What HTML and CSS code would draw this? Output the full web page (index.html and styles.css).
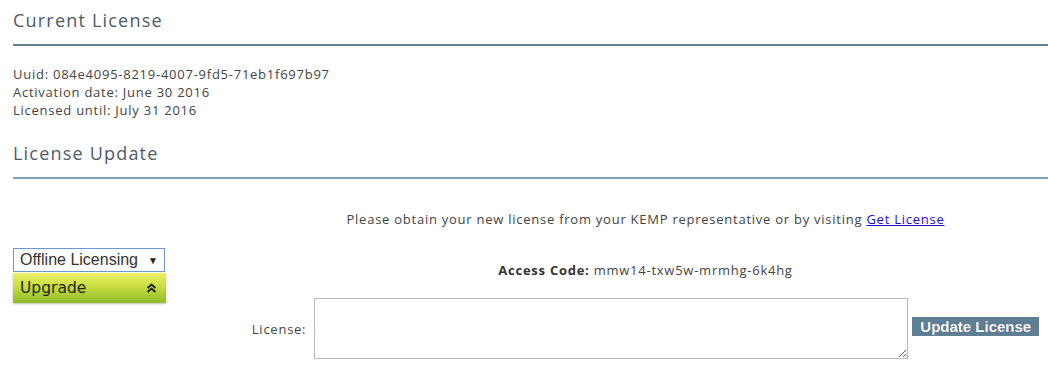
FILE: index.html
```html
<!DOCTYPE html>
<html>
<head>
<meta charset="utf-8">
<link rel="stylesheet" href="styles.css">
</head>
<body>
<div class="page">
  <h2 class="section-title first">Current License</h2>
  <div class="info">
    <div>Uuid: 084e4095-8219-4007-9fd5-71eb1f697b97</div>
    <div>Activation date: June 30 2016</div>
    <div>Licensed until: July 31 2016</div>
  </div>
  <h2 class="section-title second">License Update</h2>
  <div class="update">
    <div class="side">
      <div class="select-box">
        <span class="select-text">Offline Licensing</span>
        <span class="select-arrow">▼</span>
      </div>
      <div class="upgrade">
        <span>Upgrade</span>
        <svg class="chev" width="11" height="10" viewBox="0 0 11 10"><path d="M1.5 5 L5.5 1.5 L9.5 5 M1.5 9 L5.5 5.5 L9.5 9" fill="none" stroke="#222" stroke-width="2"/></svg>
      </div>
    </div>
    <div class="main">
      <p class="notice">Please obtain your new license from your KEMP representative or by visiting <a href="#">Get License</a></p>
      <p class="access"><b>Access Code:</b> mmw14-txw5w-mrmhg-6k4hg</p>
      <div class="form-row">
        <label class="lic-label">License:</label>
        <textarea class="lic-text"></textarea>
        <button class="btn">Update License</button>
      </div>
    </div>
  </div>
</div>
</body>
</html>
```

FILE: styles.css
```css
html, body {
  margin: 0;
  padding: 0;
  background: #fff;
}
body {
  font-family: "Open Sans", "Noto Sans", sans-serif;
  font-size: 13px;
  letter-spacing: 0.75px;
  color: #444;
}
.page {
  padding-left: 13px;
}
.section-title {
  margin: 0;
  font-weight: normal;
  font-size: 18px;
  letter-spacing: 1.2px;
  color: #4d5c6b;
  line-height: 24px;
  padding-bottom: 12px;
}
.section-title.first {
  padding-top: 8px;
  border-bottom: 2px solid #6b8193;
}
.section-title.second {
  border-bottom: 2px solid #86a0b6;
  padding-bottom: 12px;
}
.info {
  padding-top: 19px;
  padding-bottom: 22px;
  line-height: 18px;
}
.update {
  display: flex;
}
.side {
  width: 153px;
  padding-top: 69px;
}
.select-box {
  box-sizing: border-box;
  height: 24px;
  border: 1px solid #6f95d4;
  display: flex;
  align-items: center;
  justify-content: space-between;
  padding: 0 6px 0 6px;
  font-family: "Liberation Sans", Arial, sans-serif;
  font-size: 16px;
  letter-spacing: 0;
  color: #333;
  width: 152px;
}
.select-arrow {
  font-size: 10px;
  color: #222;
}
.upgrade {
  margin-top: 1px;
  height: 30px;
  background: linear-gradient(#ecf164, #c9dd42 45%, #8bbb28);
  box-shadow: 0 1px 2px rgba(0,0,0,0.25);
  display: flex;
  align-items: center;
  justify-content: space-between;
  padding: 0 9px 0 7px;
  font-family: "DejaVu Sans", Verdana, sans-serif;
  font-size: 15.5px;
  letter-spacing: 0;
  color: #22280e;
}
.main {
  flex: 1;
  margin-left: 77px;
  display: flex;
  flex-direction: column;
  align-items: center;
}
.notice {
  margin: 31px 0 0;
  line-height: 18px;
}
.notice a {
  color: #1a0dcc;
}
.access {
  margin: 33px 0 0;
  line-height: 18px;
}
.access b {
  color: #333;
}
.form-row {
  margin-top: 19px;
  display: flex;
  align-items: center;
}
.lic-label {
  margin-right: 8px;
}
.lic-text {
  box-sizing: border-box;
  width: 594px;
  height: 61px;
  border: 1px solid #bbb;
  margin: 0;
}
.btn {
  margin-left: 4px;
  margin-top: -5px;
  height: 19px;
  padding: 0 8px;
  border: none;
  background: #5e7e94;
  color: #fff;
  font-family: "Liberation Sans", Arial, sans-serif;
  font-weight: bold;
  font-size: 15px;
  letter-spacing: 0;
  line-height: 19px;
  text-shadow: 0 0 1px #345;
}
```
